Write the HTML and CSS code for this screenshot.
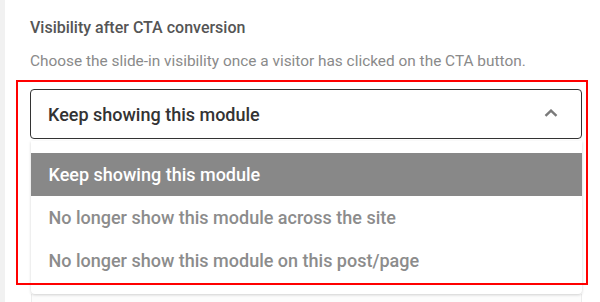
FILE: index.html
```html
<!DOCTYPE html>
<html>
<head>
<meta charset="utf-8">
<link rel="stylesheet" href="styles.css">
</head>
<body>
<div class="page">
  <div class="strip"></div>
  <div class="content">
    <div class="title">Visibility after CTA conversion</div>
    <div class="desc">Choose the slide-in visibility once a visitor has clicked on the CTA button.</div>
    <div class="select">
      <span class="value">Keep showing this module</span>
      <svg class="chev" width="14" height="8" viewBox="0 0 14 8"><path d="M1.5 6.8 L7 1.6 L12.5 6.8" fill="none" stroke="#7a7a7a" stroke-width="2.4"/></svg>
    </div>
    <div class="menu">
      <div class="opt active">Keep showing this module</div>
      <div class="opt">No longer show this module across the site</div>
      <div class="opt">No longer show this module on this post/page</div>
    </div>
    <div class="below"></div>
    <div class="annot"></div>
  </div>
</div>
</body>
</html>
```
FILE: styles.css
```css
html, body { margin: 0; padding: 0; background: #fff; }
body { font-family: Roboto, "Liberation Sans", sans-serif; width: 600px; height: 302px; overflow: hidden; }
.page { display: flex; height: 302px; }
.strip { width: 5px; background: #f1f1f1; flex: none; }
.content { position: relative; flex: 1; padding: 18px 0 0 25px; }
.title { font-size: 16px; line-height: 20px; font-weight: 500; color: #555; }
.desc { font-size: 15.4px; line-height: 20px; color: #8a8a8a; margin-top: 13px; }
.select { margin-top: 18px; box-sizing: border-box; width: 552px; height: 50px; border: 1.5px solid #333; border-radius: 4px; display: flex; align-items: center; justify-content: space-between; padding: 0 23px 0 17px; }
.value { font-size: 18px; font-weight: 500; color: #333; }
.chev { display: block; margin-top: -2px; }
.menu { position: relative; z-index: 1; margin-top: 2px; width: 551px; margin-left: 0.5px; padding: 12px 0; background: #fff; border-radius: 0 0 4px 4px; box-shadow: 0 1px 3px rgba(0,0,0,0.18); }
.opt { height: 43px; display: flex; align-items: center; padding-left: 18px; font-size: 18px; font-weight: 500; color: #8c8c8c; }
.opt.active { background: #888; color: #fff; }
.below { width: 551px; margin-left: 0.5px; height: 20px; box-sizing: border-box; border-left: 1px solid #ececec; border-right: 1px solid #ececec; background: #fcfcfc; }
.annot { position: absolute; z-index: 2; left: 11px; top: 80px; width: 568px; height: 201px; border: 2px solid #f00; pointer-events: none; }
```
